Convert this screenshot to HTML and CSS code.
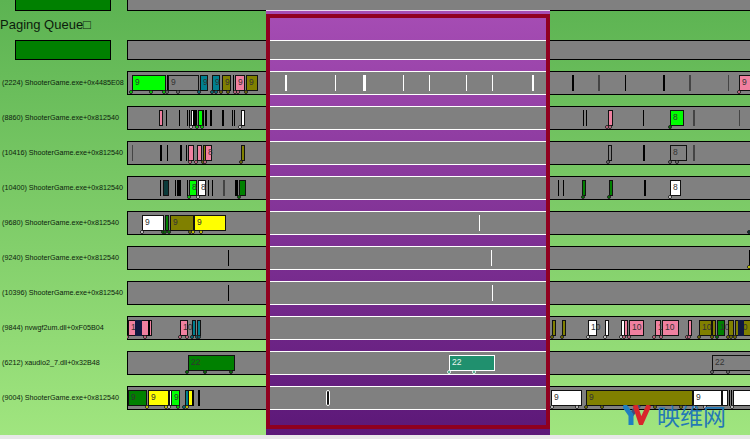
FILE: index.html
```html
<!DOCTYPE html>
<html>
<head>
  <title>Paging Queue</title>
  <meta charset="UTF-8">
  <link rel="stylesheet" href="styles.css">
</head>
<body>
<div class="page">

  <div class="row row_cut">
    <div class="label"><div class="queue_box"></div></div>
    <div class="track"></div>
  </div>
  <div class="queue_title">Paging Queue□</div>
  <div class="row row_queue">
    <div class="label"><div class="queue_box"></div></div>
    <div class="track"></div>
  </div>

  <div class="rows">
    <div class="row">
      <div class="label">(2224) ShooterGame.exe+0x4485E08</div>
      <div class="track">
        <i class="ev lime" style="left:5px;width:34px">9</i><i class="tk" style="left:40px"></i>
        <i class="ev plain" style="left:41px;width:31px">9</i><i class="ev teal" style="left:73px;width:8px">9</i>
        <i class="ev teal" style="left:85px;width:8px">9</i><i class="ev olive" style="left:95px;width:9px">9</i>
        <i class="tk" style="left:106px"></i><i class="ev pink" style="left:108px;width:10px">9</i>
        <i class="ev olive" style="left:119px;width:12px">9</i>
        <i class="dot lime" style="left:2px"></i><i class="dot lime" style="left:22px"></i><i class="dot lime" style="left:35px"></i>
        <i class="dot plain" style="left:38px"></i><i class="dot plain" style="left:49px"></i><i class="dot teal" style="left:70px"></i>
        <i class="dot teal" style="left:83px"></i><i class="dot teal" style="left:87px"></i><i class="dot olive" style="left:92px"></i>
        <i class="dot olive" style="left:99px"></i><i class="dot pink" style="left:106px"></i><i class="dot pink" style="left:109px"></i>
        <i class="dot olive" style="left:117px"></i>
        <i class="tk wide" style="left:445px"></i><i class="tk dim wide" style="left:471px"></i><i class="tk" style="left:498px"></i>
        <i class="tk wide" style="left:536px"></i><i class="tk dim wide" style="left:562px"></i><i class="tk dim" style="left:601px"></i>
        <i class="ev pink" style="left:612px;width:20px">9</i><i class="dot pink" style="left:610px"></i>
      </div>
    </div>
    <div class="row">
      <div class="label">(8860) ShooterGame.exe+0x812540</div>
      <div class="track">
        <i class="ev pink" style="left:32px;width:3px"></i><i class="tk" style="left:39px"></i><i class="tk" style="left:52px"></i>
        <i class="tk" style="left:60px"></i><i class="tk" style="left:62px"></i><i class="ev white" style="left:64px;width:3px"></i>
        <i class="tk" style="left:66px;width:4px"></i><i class="ev lime" style="left:71px;width:5px"></i>
        <i class="tk" style="left:76px"></i><i class="tk" style="left:78px"></i><i class="tk" style="left:79px"></i>
        <i class="tk wide" style="left:83px"></i><i class="tk wide" style="left:95px"></i><i class="tk" style="left:105px"></i>
        <i class="tk" style="left:107px"></i><i class="ev white" style="left:114px;width:4px"></i>
        <i class="dot white" style="left:62px"></i><i class="dot lime" style="left:68px"></i><i class="dot lime" style="left:73px"></i>
        <i class="dot white" style="left:111px"></i>
        <i class="tk" style="left:456px"></i><i class="tk" style="left:459px"></i><i class="ev pink" style="left:481px;width:5px"></i>
        <i class="tk" style="left:516px"></i><i class="ev lime" style="left:543px;width:14px">8</i>
        <i class="tk dim wide" style="left:566px"></i><i class="tk dim" style="left:612px"></i>
        <i class="dot pink" style="left:478px"></i><i class="dot pink" style="left:481px"></i><i class="dot green" style="left:541px"></i>
      </div>
    </div>
    <div class="row">
      <div class="label">(10416) ShooterGame.exe+0x812540</div>
      <div class="track">
        <i class="tk dim" style="left:5px"></i><i class="tk wide" style="left:33px"></i><i class="tk" style="left:40px"></i>
        <i class="tk wide" style="left:53px"></i><i class="tk" style="left:59px"></i><i class="ev pink" style="left:61px;width:6px"></i>
        <i class="ev pink" style="left:70px;width:5px"></i><i class="ev olive" style="left:76px;width:2px"></i>
        <i class="ev pink" style="left:78px;width:7px">8</i><i class="ev olive" style="left:114px;width:4px"></i>
        <i class="dot pink" style="left:61px"></i><i class="dot pink" style="left:67px"></i><i class="dot olive" style="left:74px"></i>
        <i class="dot pink" style="left:76px"></i><i class="dot olive" style="left:112px"></i>
        <i class="ev plain" style="left:481px;width:4px"></i><i class="tk wide" style="left:516px"></i>
        <i class="ev plain" style="left:543px;width:17px">8</i><i class="tk dim wide" style="left:566px"></i>
        <i class="dot plain" style="left:479px"></i><i class="dot plain" style="left:541px"></i><i class="dot plain" style="left:548px"></i>
      </div>
    </div>
    <div class="row">
      <div class="label">(10400) ShooterGame.exe+0x812540</div>
      <div class="track">
        <i class="tk" style="left:33px"></i><i class="ev deep" style="left:36px;width:6px"></i><i class="tk" style="left:48px"></i>
        <i class="tk" style="left:50px;width:4px"></i><i class="tk" style="left:60px"></i><i class="ev lime" style="left:62px;width:8px">8</i>
        <i class="ev white" style="left:71px;width:8px">8</i><i class="tk" style="left:81px"></i><i class="tk" style="left:85px"></i>
        <i class="tk dim wide" style="left:96px"></i><i class="tk" style="left:108px;width:3px"></i><i class="ev green" style="left:112px;width:7px"></i>
        <i class="dot lime" style="left:60px"></i><i class="dot white" style="left:69px"></i><i class="dot green" style="left:110px"></i>
        <i class="tk" style="left:431px"></i><i class="tk" style="left:436px"></i><i class="ev green" style="left:455px;width:4px"></i>
        <i class="ev green" style="left:482px;width:3px"></i><i class="tk wide" style="left:517px"></i>
        <i class="ev white" style="left:543px;width:11px">8</i>
        <i class="dot green" style="left:454px"></i><i class="dot green" style="left:480px"></i><i class="dot white" style="left:541px"></i>
      </div>
    </div>
    <div class="row">
      <div class="label">(9680) ShooterGame.exe+0x812540</div>
      <div class="track">
        <i class="ev white" style="left:15px;width:22px">9</i><i class="ev green" style="left:38px;width:4px"></i>
        <i class="ev olive" style="left:43px;width:24px">9</i><i class="ev yellow" style="left:67px;width:32px">9</i>
        <i class="dot white" style="left:13px"></i><i class="dot green" style="left:34px"></i><i class="dot green" style="left:36px"></i>
        <i class="dot green" style="left:40px"></i><i class="dot olive" style="left:61px"></i><i class="dot yellow" style="left:64px"></i>
        <i class="dot yellow" style="left:72px"></i><i class="dot deep" style="left:620px"></i>
      </div>
    </div>
    <div class="row">
      <div class="label">(9240) ShooterGame.exe+0x812540</div>
      <div class="track">
        <i class="tk" style="left:101px"></i><i class="tk" style="left:622px"></i><i class="dot yellow" style="left:620px"></i>
      </div>
    </div>
    <div class="row">
      <div class="label">(10396) ShooterGame.exe+0x812540</div>
      <div class="track"><i class="tk" style="left:101px"></i></div>
    </div>
    <div class="row">
      <div class="label">(9844) nvwgf2um.dll+0xF05B04</div>
      <div class="track">
        <i class="ev pink" style="left:1px;width:24px">1</i><i class="tk navy" style="left:8px;width:7px"></i><i class="tk wide" style="left:21px"></i>
        <i class="ev pink" style="left:53px;width:8px">10</i><i class="ev teal" style="left:65px;width:3px"></i><i class="ev teal" style="left:70px;width:3px"></i>
        <i class="dot pink" style="left:-2px"></i><i class="dot pink" style="left:16px"></i><i class="dot pink" style="left:51px"></i>
        <i class="dot pink" style="left:58px"></i><i class="dot teal" style="left:63px"></i><i class="dot teal" style="left:68px"></i><i class="dot teal" style="left:70px"></i>
        <i class="ev olive" style="left:425px;width:3px"></i><i class="ev olive" style="left:435px;width:3px"></i>
        <i class="ev white" style="left:461px;width:9px">10</i><i class="ev white" style="left:478px;width:4px"></i>
        <i class="ev white" style="left:494px;width:3px"></i><i class="ev pink" style="left:497px;width:3px"></i>
        <i class="ev pink" style="left:502px;width:15px">10</i><i class="ev pink" style="left:528px;width:6px">1</i>
        <i class="ev pink" style="left:535px;width:17px">10</i><i class="ev pink" style="left:561px;width:4px"></i>
        <i class="ev olive" style="left:572px;width:13px">10</i><i class="ev olive" style="left:585px;width:3px"></i>
        <i class="ev green" style="left:590px;width:8px">10</i><i class="ev olive" style="left:601px;width:6px"></i>
        <i class="ev olive" style="left:608px;width:20px">10</i><i class="tk navy" style="left:611px;width:6px"></i>
        <i class="dot olive" style="left:423px"></i><i class="dot olive" style="left:433px"></i><i class="dot white" style="left:459px"></i>
        <i class="dot white" style="left:476px"></i><i class="dot white" style="left:492px"></i><i class="dot pink" style="left:495px"></i>
        <i class="dot pink" style="left:500px"></i><i class="dot pink" style="left:525px"></i><i class="dot pink" style="left:532px"></i>
        <i class="dot pink" style="left:558px"></i><i class="dot pink" style="left:560px"></i><i class="dot olive" style="left:570px"></i>
        <i class="dot olive" style="left:583px"></i><i class="dot green" style="left:588px"></i><i class="dot olive" style="left:599px"></i>
        <i class="dot olive" style="left:602px"></i><i class="dot olive" style="left:606px"></i>
      </div>
    </div>
    <div class="row">
      <div class="label">(6212) xaudio2_7.dll+0x32B48</div>
      <div class="track">
        <i class="ev green" style="left:61px;width:47px">22</i>
        <i class="dot green" style="left:58px"></i><i class="dot green" style="left:76px"></i><i class="dot green" style="left:102px"></i>
        <i class="ev plain" style="left:585px;width:40px">22</i>
        <i class="dot plain" style="left:583px"></i><i class="dot plain" style="left:599px"></i>
      </div>
    </div>
    <div class="row">
      <div class="label">(9004) ShooterGame.exe+0x812540</div>
      <div class="track">
        <i class="ev green" style="left:1px;width:19px">9</i><i class="ev yellow" style="left:21px;width:21px">9</i>
        <i class="ev white" style="left:42px;width:2px"></i><i class="ev lime" style="left:44px;width:9px">9</i>
        <i class="ev teal" style="left:58px;width:3px"></i><i class="ev yellow" style="left:61px;width:6px"></i>
        <i class="tk wide" style="left:65px"></i><i class="tk wide" style="left:71px"></i>
        <i class="dot yellow" style="left:18px"></i><i class="dot yellow" style="left:37px"></i><i class="dot white" style="left:40px"></i>
        <i class="dot lime" style="left:49px"></i><i class="dot teal" style="left:55px"></i><i class="dot yellow" style="left:58px"></i>
        <i class="ev white" style="left:424px;width:31px">9</i><i class="ev olive" style="left:459px;width:107px">9</i>
        <i class="ev white" style="left:566px;width:29px">9</i><i class="ev white" style="left:595px;width:6px"></i>
        <i class="tk" style="left:602px"></i><i class="tk" style="left:604px"></i><i class="ev white" style="left:606px;width:20px"></i>
        <i class="dot white" style="left:423px"></i><i class="dot white" style="left:448px"></i><i class="dot olive" style="left:457px"></i>
        <i class="dot olive" style="left:473px"></i><i class="dot olive" style="left:526px"></i><i class="dot olive" style="left:552px"></i>
        <i class="dot white" style="left:565px"></i><i class="dot white" style="left:576px"></i><i class="dot white" style="left:603px"></i>
      </div>
    </div>
  </div>

  <!-- selected time range, drawn over the tracks -->
  <div class="selection">
    <div class="sel_frame">
      <div class="track sel row_queue"></div>
      <div class="rows">
        <div class="track sel">
          <i class="tk wh wide" style="left:15px"></i><i class="tk wh" style="left:65px"></i><i class="tk wh" style="left:93px;width:3px"></i>
          <i class="tk wh" style="left:133px"></i><i class="tk wh" style="left:159px"></i><i class="tk wh" style="left:196px"></i>
          <i class="tk wh" style="left:222px"></i><i class="tk wh wide" style="left:262px"></i>
        </div>
        <div class="track sel"></div>
        <div class="track sel"></div>
        <div class="track sel"></div>
        <div class="track sel"><i class="tk wh" style="left:209px"></i></div>
        <div class="track sel"><i class="tk wh" style="left:221px"></i></div>
        <div class="track sel"><i class="tk wh" style="left:222px"></i></div>
        <div class="track sel"></div>
        <div class="track sel">
          <i class="ev inv" style="left:179px;width:46px">22</i>
          <i class="dot inv" style="left:177px"></i><i class="dot inv" style="left:202px"></i>
        </div>
        <div class="track sel"><i class="ev pill" style="left:56px;width:4px"></i></div>
      </div>
    </div>
  </div>

  <div class="logo">
    <svg width="28" height="20" viewBox="0 0 28 20">
      <path d="M16 0 L8 10" fill="none" stroke="#3d4f7c" stroke-width="5"/>
      <path d="M1 0 L8 10 L8 20" fill="none" stroke="#1f7fc0" stroke-width="5"/>
      <path d="M12 0 L18 18 L26 0" fill="none" stroke="#d8262c" stroke-width="5"/>
    </svg>
    <span class="logo_text">映维网</span>
  </div>
</div>
</body>
</html>
```

FILE: styles.css
```css
* {box-sizing: border-box;}
body {margin: 0; background: #e8e8e8;}

.page {
  position: relative;
  width: 750px;
  height: 435px;
  background: linear-gradient(#5cb352, #a0e57f);
  font-family: "Liberation Sans", Arial, sans-serif;
  color: #0c1c0c;
}

.row {display: flex; height: 24px;}
.row_cut {height: 11px;}
.row_queue {height: 20px; margin-bottom: 11px;}
.rows {display: flex; flex-direction: column; gap: 11px;}

.label {
  width: 127px;
  padding-left: 2px;
  font-size: 7.2px;
  line-height: 23px;
  white-space: nowrap;
}
.queue_box {
  height: 100%;
  width: 96px;
  margin-left: 13px;
  background: #008000;
  border: 1px solid #000;
}
.row_cut .queue_box {border-top: 0;}
.queue_title {height: 29px; font-size: 13px; line-height: 27px;}

.track {
  flex: 1;
  position: relative;
  height: 100%;
  background: #808080;
  border-top: 1px solid #000;
  border-bottom: 1px solid #000;
  box-shadow: inset 1px 0 #000;
  overflow: hidden;
}
.row_cut .track {border-top: 0;}

.ev {
  position: absolute;
  top: 3px;
  height: 16px;
  padding-left: 2px;
  border: 1px solid #111;
  font: normal 8.5px/13px "Liberation Sans", sans-serif;
  color: #333;
  white-space: nowrap;
}
.tk {position: absolute; top: 3px; height: 16px; width: 1px; background: #000;}
.tk.wide {width: 2px;}
.tk.dim {background: #444;}
.tk.navy {background: #101840;}
.tk.wh {background: #fff;}
.dot {
  position: absolute;
  top: 18px;
  width: 4px;
  height: 4px;
  border-radius: 50%;
  border: 1px solid #222;
}

.lime {background-color: #00ff00;}
.plain {background-color: #808080;}
.teal {background-color: #007f8f;}
.olive {background-color: #808000;}
.pink {background-color: #f080a0;}
.green {background-color: #008000;}
.white {background-color: #fff;}
.yellow {background-color: #ffff00;}
.deep {background-color: #0a3a3a;}

.selection {
  position: absolute;
  left: 266px;
  top: 10px;
  width: 284px;
  height: 425px;
  padding-top: 4px;
  border-top: 1px solid #e8d8ec;
  background: linear-gradient(#a64db4, #5c1878);
}
.sel_frame {
  height: 415px;
  margin-top: -1px;
  padding-top: 22px;
  border: 4px solid #900020;
}
.track.sel {
  flex: none;
  height: 24px;
  border-color: #fff;
  box-shadow: none;
}
.track.sel.row_queue {height: 20px;}
.ev.inv {background: #20906e; border-color: #fff; color: #e8f4ee;}
.dot.inv {background: #20906e; border-color: #e8f4ee;}
.ev.pill {background: #111; border-color: #fff; border-radius: 2px;}

.logo {
  position: absolute;
  left: 623px;
  top: 405px;
  display: flex;
  gap: 6px;
  align-items: center;
  height: 20px;
}
.logo_text {
  font-family: "Noto Sans CJK SC", sans-serif;
  font-size: 23px;
  line-height: 20px;
  color: #2479b5;
}
```
